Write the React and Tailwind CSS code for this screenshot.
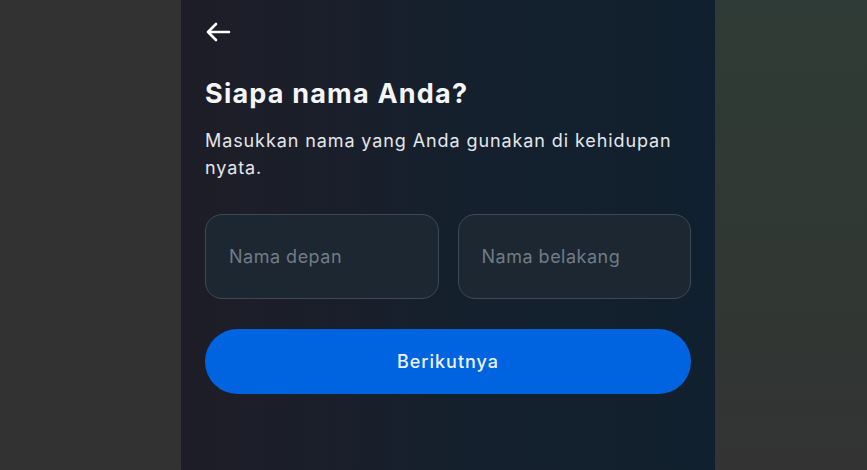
import React from 'react'

export default function App() {
  return (
    <div
      className="flex h-[470px] w-[867px] overflow-hidden bg-[#333333]"
      style={{ fontFamily: 'Inter, "Noto Sans", sans-serif' }}
    >
      {/* Left backdrop */}
      <div className="w-[181px] shrink-0 bg-[#323232]" />

      {/* Center panel */}
      <div className="flex w-[534px] shrink-0 flex-col bg-gradient-to-r from-[#1e1d27] via-[#15202d] to-[#11202e] px-6 pt-[20px]">
        <button className="flex h-[24px] w-[28px] items-center text-white">
          <svg width="26" height="22" viewBox="0 0 26 22" fill="none">
            <path
              d="M24 11H3M11 3L3 11l8 8"
              stroke="currentColor"
              strokeWidth="2.6"
              strokeLinecap="round"
              strokeLinejoin="round"
            />
          </svg>
        </button>

        <h1 className="mt-[33px] text-[27px] font-bold leading-[34px] tracking-[1.2px] text-[#f5f6f7]">
          Siapa nama Anda?
        </h1>
        <p className="mt-[16px] w-[470px] text-[18px] leading-[27px] tracking-[0.9px] text-[#e4e6eb]">
          Masukkan nama yang Anda gunakan di kehidupan nyata.
        </p>

        <div className="mt-[33px] flex gap-[19px]">
          <div className="flex h-[85px] flex-1 items-center rounded-[17px] border border-[#3c4a57] bg-[#1c2731] px-[23px]">
            <span className="text-[18px] tracking-[0.5px] text-[#707c87]">Nama depan</span>
          </div>
          <div className="flex h-[85px] flex-1 items-center rounded-[17px] border border-[#3c4a57] bg-[#1c2731] px-[23px]">
            <span className="text-[18px] tracking-[0.5px] text-[#707c87]">Nama belakang</span>
          </div>
        </div>

        <button className="mt-[30px] flex h-[65px] w-full items-center justify-center rounded-full bg-[#0064e0] text-[18px] font-medium tracking-[1px] text-[#eef4ff]">
          Berikutnya
        </button>
      </div>

      {/* Right backdrop */}
      <div className="flex-1 bg-gradient-to-b from-[#2f3b36] via-[#303833] to-[#333333]" />
    </div>
  )
}
